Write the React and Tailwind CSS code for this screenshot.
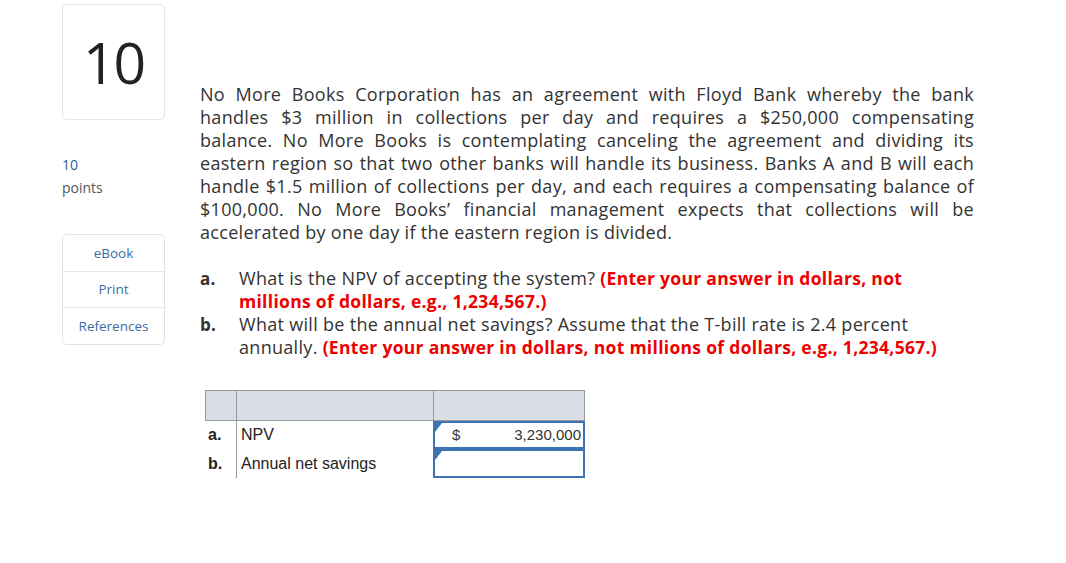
import React from "react";

const body = { fontFamily: "'Open Sans', Lato, sans-serif" };
const arial = { fontFamily: "'Liberation Sans', Arial, sans-serif" };

const lines = [
  "No More Books Corporation has an agreement with Floyd Bank whereby the bank",
  "handles $3 million in collections per day and requires a $250,000 compensating",
  "balance. No More Books is contemplating canceling the agreement and dividing its",
  "eastern region so that two other banks will handle its business. Banks A and B will each",
  "handle $1.5 million of collections per day, and each requires a compensating balance of",
  "$100,000. No More Books’ financial management expects that collections will be",
];

const Sidebar = () => (
  <div className="w-[103px] shrink-0">
    <div className="h-[116px] mt-[4px] border border-[#e6e6e6] rounded-[5px] flex items-center justify-center">
      <span className="text-[57px] text-[#222] leading-none tracking-[-2px]">10</span>
    </div>
    <div className="mt-[33px] text-[14px] leading-[23px]">
      <div className="text-[#2d5f8e]">10</div>
      <div className="text-[#555]">points</div>
    </div>
    <div className="mt-[35px] border border-[#e3e3e3] rounded-[5px] text-[13.5px] text-[#3b6ea5]">
      <div className="h-[37px] flex items-center justify-center border-b border-[#e8e8e8]">eBook</div>
      <div className="h-[36px] flex items-center justify-center border-b border-[#e8e8e8]">Print</div>
      <div className="h-[36px] flex items-center justify-center">References</div>
    </div>
  </div>
);

const Input = ({ value }) => (
  <div className="relative h-full border-2 border-[#3d73b5] flex items-center px-[17px] text-[15px] text-[#333]">
    <span className="absolute left-0 top-0 w-0 h-0 border-t-[9px] border-t-[#3d73b5] border-r-[7px] border-r-transparent" />
    {value !== undefined && (
      <>
        <span>$</span>
        <span className="ml-auto -mr-[15px]">{value}</span>
      </>
    )}
  </div>
);

const Red = ({ children }) => (
  <b className="text-[#e00] text-[17.5px] tracking-[0.3px]">{children}</b>
);

export default function App() {
  return (
    <div className="w-[1066px] h-[563px] bg-white flex pl-[62px]" style={body}>
      <Sidebar />
      <div className="ml-[35px] pt-[83px] w-[774px]">
        <div className="text-[18px] leading-[23px] tracking-[0.3px] text-[#333]">
          {lines.map((l) => (
            <div key={l} className="text-justify [text-align-last:justify]">{l}</div>
          ))}
          <div>accelerated by one day if the eastern region is divided.</div>
        </div>
        <div className="mt-[23px] text-[18px] leading-[23px] tracking-[0.3px] text-[#333]">
          <div className="flex">
            <span className="w-[39px] font-bold text-[17px]">a.</span>
            <span className="w-[720px]">
              What is the NPV of accepting the system? <Red>(Enter your answer in dollars, not</Red>
              <br />
              <Red>millions of dollars, e.g., 1,234,567.)</Red>
            </span>
          </div>
          <div className="flex">
            <span className="w-[39px] font-bold text-[17px]">b.</span>
            <span className="w-[720px]">
              What will be the annual net savings? Assume that the T-bill rate is 2.4 percent
              <br />
              annually. <Red>(Enter your answer in dollars, not millions of dollars, e.g., 1,234,567.)</Red>
            </span>
          </div>
        </div>
        <div className="mt-[31px] ml-[5px] w-[380px] text-[16px] text-[#222]" style={arial}>
          <div className="flex h-[30px] bg-[#d9dde6] border-t border-[#999]">
            <div className="w-[31px] border-l border-[#999]" />
            <div className="w-[197px] border-l border-[#999]" />
            <div className="w-[152px] border-l border-r border-[#999]" />
          </div>
          <div className="flex h-[29px] border-t border-[#999]">
            <div className="w-[31px] flex items-center pl-[3px] font-bold">a.</div>
            <div className="w-[197px] border-l border-[#999] flex items-center pl-[4px]">NPV</div>
            <div className="w-[152px]"><Input value="3,230,000" /></div>
          </div>
          <div className="flex h-[29px]">
            <div className="w-[31px] flex items-center pl-[3px] font-bold">b.</div>
            <div className="w-[197px] border-l border-[#999] flex items-center pl-[4px]">Annual net savings</div>
            <div className="w-[152px]"><Input /></div>
          </div>
        </div>
      </div>
    </div>
  );
}
